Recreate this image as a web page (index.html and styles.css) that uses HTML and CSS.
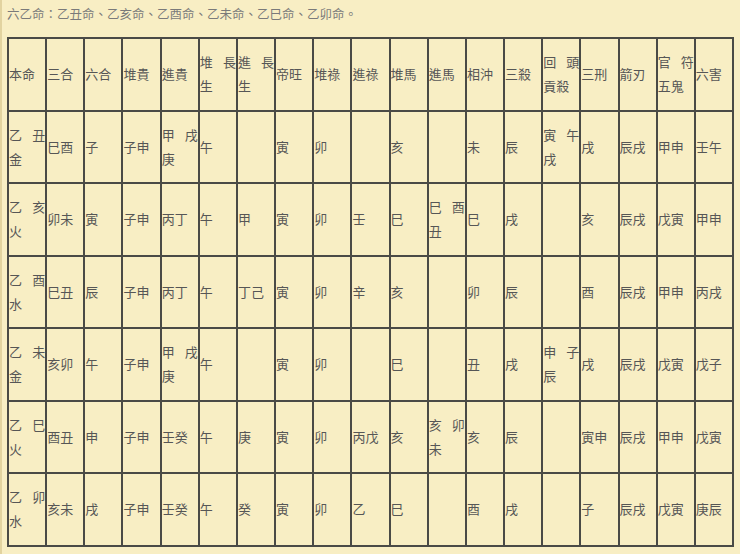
FILE: index.html
```html
<!DOCTYPE html>
<html lang="zh-Hant">
<head>
<meta charset="utf-8">
<title>六乙命</title>
<link rel="stylesheet" href="styles.css">
</head>
<body>
<p class="title">六乙命：乙丑命、乙亥命、乙酉命、乙未命、乙巳命、乙卯命。</p>
<table class="grid">
<tr><td>本命</td><td>三合</td><td>六合</td><td>堆貴</td><td>進貴</td><td>堆長生</td><td>進長生</td><td>帝旺</td><td>堆祿</td><td>進祿</td><td>堆馬</td><td>進馬</td><td>相沖</td><td>三殺</td><td>回頭貢殺</td><td>三刑</td><td>箭刃</td><td>官符五鬼</td><td>六害</td></tr>
<tr><td>乙丑金</td><td>巳酉</td><td>子</td><td>子申</td><td>甲戌庚</td><td>午</td><td></td><td>寅</td><td>卯</td><td></td><td>亥</td><td></td><td>未</td><td>辰</td><td>寅午戌</td><td>戌</td><td>辰戌</td><td>甲申</td><td>壬午</td></tr>
<tr><td>乙亥火</td><td>卯未</td><td>寅</td><td>子申</td><td>丙丁</td><td>午</td><td>甲</td><td>寅</td><td>卯</td><td>壬</td><td>巳</td><td>巳酉丑</td><td>巳</td><td>戌</td><td></td><td>亥</td><td>辰戌</td><td>戊寅</td><td>甲申</td></tr>
<tr><td>乙酉水</td><td>巳丑</td><td>辰</td><td>子申</td><td>丙丁</td><td>午</td><td>丁己</td><td>寅</td><td>卯</td><td>辛</td><td>亥</td><td></td><td>卯</td><td>辰</td><td></td><td>酉</td><td>辰戌</td><td>甲申</td><td>丙戌</td></tr>
<tr><td>乙未金</td><td>亥卯</td><td>午</td><td>子申</td><td>甲戌庚</td><td>午</td><td></td><td>寅</td><td>卯</td><td></td><td>巳</td><td></td><td>丑</td><td>戌</td><td>申子辰</td><td>戌</td><td>辰戌</td><td>戊寅</td><td>戊子</td></tr>
<tr><td>乙巳火</td><td>酉丑</td><td>申</td><td>子申</td><td>壬癸</td><td>午</td><td>庚</td><td>寅</td><td>卯</td><td>丙戊</td><td>亥</td><td>亥卯未</td><td>亥</td><td>辰</td><td></td><td>寅申</td><td>辰戌</td><td>甲申</td><td>戊寅</td></tr>
<tr><td>乙卯水</td><td>亥未</td><td>戌</td><td>子申</td><td>壬癸</td><td>午</td><td>癸</td><td>寅</td><td>卯</td><td>乙</td><td>巳</td><td></td><td>酉</td><td>戌</td><td></td><td>子</td><td>辰戌</td><td>戊寅</td><td>庚辰</td></tr>
</table>
</body>
</html>
```
FILE: styles.css
```css
html, body {
  margin: 0;
  padding: 0;
  background: #f8eec4;
}
body {
  border-left: 2px solid #e2d3a0;
  min-height: 554px;
  box-sizing: border-box;
  padding-left: 5px;
  font-family: "Noto Sans CJK TC", "Noto Sans CJK SC", sans-serif;
}
.title {
  margin: 0;
  padding-top: 1px;
  line-height: 25px;
  font-size: 12.5px;
  color: #7a7a7a;
}
.grid {
  margin-top: 11px;
  width: 727px;
  table-layout: fixed;
  border-collapse: separate;
  border-spacing: 0;
  border-top: 2px solid #4a4a46;
  border-left: 2px solid #4a4a46;
  background: #f8eec4;
}
.grid td {
  height: 70.5px;
  padding: 0;
  border-right: 2px solid #4a4a46;
  border-bottom: 2px solid #4a4a46;
  font-size: 13px;
  line-height: 24px;
  color: #565656;
  text-align: justify;
  vertical-align: middle;
  word-break: break-all;
}
```
